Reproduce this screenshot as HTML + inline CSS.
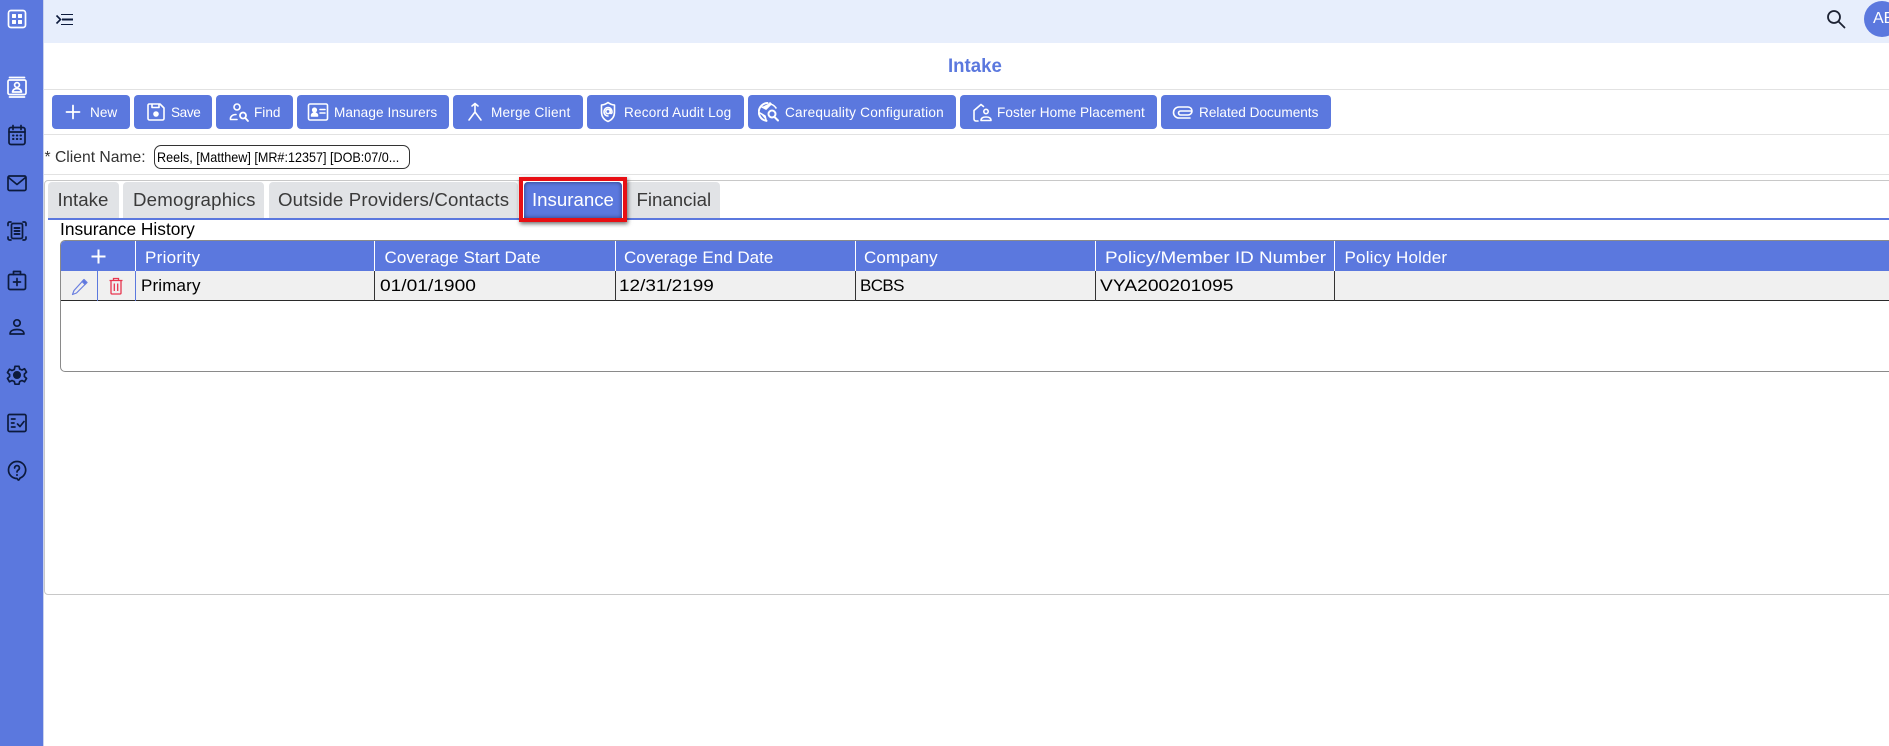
<!DOCTYPE html>
<html lang="en"><head><meta charset="utf-8"><title>Intake</title>
<style>
html,body{margin:0;padding:0;width:1889px;height:746px;overflow:hidden;background:#fff;font-family:"Liberation Sans",sans-serif}
#p{position:relative;width:1889px;height:746px;overflow:hidden}
#p div,#p span,#p svg{position:absolute;box-sizing:border-box}
.t{white-space:nowrap}
.hl{left:44px;width:1845px;height:1px;background:#e2e2e2}
.b{top:95px;height:34px;background:#5b78de;border-radius:4px}
.bt{top:96px;height:34px;line-height:34px;font-size:13.6px;color:#fff;white-space:nowrap}
.ic{top:101px;width:22px;height:22px;fill:none;stroke:#fff;stroke-width:1.6;stroke-linecap:round;stroke-linejoin:round}
.si{left:5px;width:24px;height:24px;fill:none;stroke:#0c1a3c;stroke-width:1.7;stroke-linecap:round;stroke-linejoin:round}
.tab{top:182px;height:36px;background:#e1e3e6;border-radius:4px 4px 0 0}
.tt{top:182px;height:36px;line-height:36px;font-size:18.67px;color:#3a3a3a;white-space:nowrap}
.hc{top:242px;height:30px;line-height:31px;font-size:17px;color:#fff;white-space:nowrap;transform-origin:0 50%}
.rc{top:271px;height:29px;line-height:30px;font-size:17px;color:#000;white-space:nowrap;transform-origin:0 50%}
.vw{top:241px;width:1px;height:30px;background:#fff}
.vd{top:271px;width:1px;height:30px;background:#333}
</style></head><body><div id="p">

<!-- sidebar -->
<div style="left:0;top:0;width:44px;height:746px;background:#5b78de;border-right:1px solid #c9d2ee"></div>
<svg class="si" style="top:7px;stroke:#fff" viewBox="0 0 24 24"><rect x="3.500" y="3.500" width="17" height="17" rx="2.500"/><rect x="7.500" y="7.500" width="3" height="3" fill="#fff" stroke-width="1"/><rect x="13.500" y="7.500" width="3" height="3" fill="#fff" stroke-width="1"/><rect x="7.500" y="13.500" width="3" height="3" fill="#fff" stroke-width="1"/><rect x="13.500" y="13.500" width="3" height="3" fill="#fff" stroke-width="1"/></svg>
<svg class="si" style="top:75px;stroke:#fff" viewBox="0 0 24 24"><rect x="3" y="5" width="18" height="14.500" rx="1.500"/><path d="M4.500 2.500h15M4.500 22h15"/><circle cx="12" cy="10" r="2.400"/><path d="M7.500 17c.4-2.400 2.200-3.400 4.500-3.400s4.100 1 4.500 3.400z"/></svg>
<svg class="si" style="top:123px" viewBox="0 0 24 24"><rect x="4" y="4.500" width="16" height="17" rx="2"/><path d="M4 9h16M8 2.500v4M16 2.500v4"/><path d="M8 12.500h.5M11.800 12.500h.5M15.500 12.500h.5M8 16h.5M11.800 16h.5M15.500 16h.5" stroke-width="2"/></svg>
<svg class="si" style="top:171px" viewBox="0 0 24 24"><rect x="3" y="5" width="18" height="14.500" rx="1.500"/><path d="M3.500 6.500 12 13.500l8.500-7"/></svg>
<svg class="si" style="top:219px" viewBox="0 0 24 24"><path d="M3 6.500V4.500A1.500 1.500 0 0 1 4.500 3H6M18 3h1.500A1.500 1.500 0 0 1 21 4.500v2M21 18v1.500a1.500 1.500 0 0 1-1.500 1.500H18M6 21H4.500A1.500 1.500 0 0 1 3 19.500V18"/><rect x="6.500" y="4.500" width="11" height="15" rx="1.500"/><path d="M9.500 9h5M9.500 12h5M9.500 15h5" stroke-width="2"/></svg>
<svg class="si" style="top:268px" viewBox="0 0 24 24"><rect x="3.500" y="6.500" width="17" height="15" rx="1.500"/><path d="M8.500 6.500V3.500h7v3M12 10.500v7M8.500 14h7"/></svg>
<svg class="si" style="top:315px" viewBox="0 0 24 24"><circle cx="12" cy="8" r="3.200"/><path d="M5 19c0-3 3-4.500 7-4.500s7 1.500 7 4.500z"/></svg>
<svg class="si" style="top:363px" viewBox="0 0 24 24"><path d="M10 2.800h4l.7 2.700 2.300 1 2.500-1.300 2 3.400-2.100 1.900v2.500l2.100 1.900-2 3.400-2.500-1.300-2.300 1-.7 2.700h-4l-.7-2.700-2.300-1-2.500 1.300-2-3.400 2.100-1.900V11L2.500 9.100l2-3.400L7 7l2.300-1z" transform="translate(0 .5)"/><circle cx="12" cy="12" r="3.200" fill="#0c1a3c"/></svg>
<svg class="si" style="top:411px" viewBox="0 0 24 24"><rect x="3" y="3.500" width="18" height="17" rx="1.500"/><path d="M6.500 8h3.500M6.500 12h2.500M6.500 16h3.500"/><path d="M12.500 13l2.500 2.500 4-5"/></svg>
<svg class="si" style="top:458px" viewBox="0 0 24 24"><path d="M12 3.500a8.500 8.500 0 1 0 0 17c.4 0 .7 1.700 1.500 1.700s1-1.900 1.800-2.300A8.500 8.500 0 0 0 12 3.500z"/><path d="M9.600 10a2.400 2.400 0 1 1 3.700 2c-.9.600-1.300 1-1.300 2"/><path d="M12 17h.01" stroke-width="2"/></svg>

<!-- top bar -->
<div style="left:44px;top:0;width:1845px;height:43px;background:#e7eefc"></div>
<svg style="left:55px;top:12px;width:20px;height:15px;fill:none;stroke:#0c1a3c" viewBox="0 0 20 15"><path d="M1.500 3.500l4 4-4 4" stroke-width="1.600"/><path d="M6 2.500h12M6 12.500h12" stroke-width="1.100"/><path d="M7 7.500h11" stroke-width="2"/></svg>
<svg style="left:1825px;top:8px;width:22px;height:22px;fill:none;stroke:#1d2233;stroke-width:1.800;stroke-linecap:round" viewBox="0 0 22 22"><circle cx="9" cy="9" r="6"/><path d="M13.500 13.500l6 6"/></svg>
<div style="left:1864px;top:1px;width:36px;height:36px;border-radius:50%;background:#5b78de"></div>
<span class="t" style="left:1873px;top:1px;line-height:36px;font-size:16px;color:#fff">AB</span>

<!-- title -->
<span class="t" style="left:948px;top:55px;line-height:24px;font-size:19px;font-weight:bold;color:#5b78de;transform:scaleX(.98);transform-origin:0 50%">Intake</span>
<div class="hl" style="top:89px"></div>

<!-- toolbar -->
<div class="b" style="left:52px;width:78px"></div><div class="b" style="left:134px;width:78px"></div><div class="b" style="left:216px;width:77px"></div><div class="b" style="left:297px;width:152px"></div><div class="b" style="left:453px;width:130px"></div><div class="b" style="left:587px;width:157px"></div><div class="b" style="left:748px;width:208px"></div><div class="b" style="left:960px;width:197px"></div><div class="b" style="left:1161px;width:170px"></div>
<span class="bt" style="left:90px">New</span><span class="bt" style="left:171px;letter-spacing:-.4px">Save</span><span class="bt" style="left:254px">Find</span><span class="bt" style="left:334px;letter-spacing:.08px">Manage Insurers</span><span class="bt" style="left:491px;letter-spacing:.2px">Merge Client</span><span class="bt" style="left:624px;letter-spacing:.19px">Record Audit Log</span><span class="bt" style="left:785px;letter-spacing:.22px">Carequality Configuration</span><span class="bt" style="left:997px;letter-spacing:.06px">Foster Home Placement</span><span class="bt" style="left:1199px">Related Documents</span>
<svg class="ic" style="left:62px;stroke-width:1.800" viewBox="0 0 22 22"><path d="M11 4.500v13M4.500 11h13"/></svg>
<svg class="ic" style="left:145px" viewBox="0 0 22 22"><path d="M4 3h11l4 4v10.500a1.500 1.500 0 0 1-1.500 1.500h-13A1.500 1.500 0 0 1 3 17.500v-13A1.500 1.500 0 0 1 4 3z"/><path d="M7 3.500v3h7v-3"/><circle cx="11" cy="13" r="2" fill="#fff"/></svg>
<svg class="ic" style="left:228px" viewBox="0 0 22 22"><circle cx="9" cy="6" r="3"/><path d="M2.500 18.500c-.5-2.800 2-5 5.500-5M2.500 18.500H9"/><circle cx="15" cy="14.500" r="3" stroke-width="1.800"/><path d="M17.300 17l2.700 3" stroke-width="1.800"/></svg>
<svg class="ic" style="left:307px" viewBox="0 0 22 22"><rect x="1.500" y="3" width="19" height="16" rx="1.500"/><circle cx="7.500" cy="9" r="1.800" fill="#fff"/><path d="M4.500 15c0-2 1.300-3 3-3s3 1 3 3z" fill="#fff"/><path d="M13 8.500h5M13 12h5"/></svg>
<svg class="ic" style="left:464px" viewBox="0 0 22 22"><path d="M8 5l3-2.500L14 5M11 3v8M11 11l-6 8M11 11l6 8"/></svg>
<svg class="ic" style="left:597px" viewBox="0 0 22 22"><path d="M11 1.500c1.800 1.400 4 2.300 6.500 2.500v7c0 4.500-2.500 7.800-6.500 9.500C7 18.800 4.500 15.500 4.500 11V4C7 3.800 9.200 2.900 11 1.500z"/><circle cx="11" cy="10.500" r="2.200"/><path d="M13.200 8.500v3c0 1.500 1.800 1.200 1.800-.5 0-2.500-1.700-4.500-4-4.500s-4 1.900-4 4.300c0 2.600 2 4.200 4 4.200"/></svg>
<svg class="ic" style="left:758px" viewBox="0 0 22 22"><path d="M9.500 2a9 9 0 0 0-1 17.900" stroke-width="2"/><path d="M4 6l4 2 3-3 2-2-1-1M2 12l5 3 1 4" fill="#fff"/><path d="M11 3c3 0 5 1 7 4"/><circle cx="14" cy="13" r="3.500" stroke-width="2"/><path d="M16.500 16l3.500 3.500" stroke-width="2"/></svg>
<svg class="ic" style="left:971px" viewBox="0 0 22 22"><path d="M7 20H5a2 2 0 0 1-2-2V9.500L10 3.500l2.500 2"/><circle cx="15" cy="10.500" r="2.200"/><path d="M10 19.500c0-2.500 2-3.500 5-3.500s5 1 5 3.500z"/></svg>
<svg class="ic" style="left:1172px" viewBox="0 0 22 22"><path d="M20 10H8.500a2 2 0 0 0 0 4H16a4 4 0 0 0 0-8H7a5.500 5.500 0 0 0 0 11h11"/></svg>
<div class="hl" style="top:134px"></div>

<!-- client -->
<span class="t" style="left:44.500px;top:146px;line-height:24px;font-size:15.700px;color:#333">* Client Name:</span>
<div style="left:154px;top:145px;width:256px;height:24px;border:1px solid #333;border-radius:7px;background:#fff"></div>
<span class="t" style="left:157px;top:145px;line-height:24px;font-size:14px;color:#000;transform:scaleX(.9);transform-origin:0 50%">Reels, [Matthew] [MR#:12357] [DOB:07/0...</span>
<div class="hl" style="top:174px"></div>

<!-- panel -->
<div style="left:44px;top:180px;width:1860px;height:415px;border:1px solid #c8c8c8;border-radius:4px;background:#fff"></div>
<div class="tab" style="left:48px;width:71px"></div><div class="tab" style="left:123px;width:141px"></div><div class="tab" style="left:269px;width:249px"></div><div class="tab" style="left:524px;width:98px;background:#5b78de;box-shadow:inset 0 0 4px rgba(0,0,30,.55)"></div><div class="tab" style="left:626px;width:94px"></div>
<div style="left:48px;top:218px;width:1841px;height:2px;background:#5b78de"></div>
<div style="left:519px;top:177px;width:108px;height:45px;border:4px solid #e80f14;box-shadow:1px 2px 4px rgba(0,0,0,.55)"></div>
<span class="tt" style="left:57.500px">Intake</span><span class="tt" style="left:133px;letter-spacing:.2px">Demographics</span><span class="tt" style="left:278px;letter-spacing:.16px">Outside Providers/Contacts</span><span class="tt" style="left:532px;color:#fff">Insurance</span><span class="tt" style="left:636.500px">Financial</span>

<span class="t" style="left:60px;top:219px;line-height:20px;font-size:17.330px;color:#000">Insurance History</span>

<!-- table -->
<div style="left:60px;top:240px;width:1860px;height:132px;border:1px solid #8a8a8a;border-radius:5px;background:#fff;overflow:hidden"></div>
<div style="left:61px;top:241px;width:1828px;height:30px;background:#5b78de;border-radius:4px 0 0 0"></div>
<div style="left:61px;top:271px;width:1828px;height:30px;background:#f0f0f0;border-bottom:1.500px solid #2a2a2a"></div>
<div class="vw" style="left:135px"></div><div class="vw" style="left:374px"></div><div class="vw" style="left:615px"></div><div class="vw" style="left:855px"></div><div class="vw" style="left:1095px"></div><div class="vw" style="left:1334px"></div>
<div class="vd" style="left:97px;background:#5b78de"></div><div class="vd" style="left:135px;background:#5b78de"></div><div class="vd" style="left:374px"></div><div class="vd" style="left:615px"></div><div class="vd" style="left:855px"></div><div class="vd" style="left:1095px"></div><div class="vd" style="left:1334px"></div>
<svg style="left:90px;top:248px;width:17px;height:17px;fill:none;stroke:#fff;stroke-width:2" viewBox="0 0 17 17"><path d="M8.500 1.500v14M1.500 8.500h14"/></svg>
<span class="hc" style="left:145px;letter-spacing:.3px">Priority</span><span class="hc" style="left:384.500px;letter-spacing:.06px">Coverage Start Date</span><span class="hc" style="left:624px">Coverage End Date</span><span class="hc" style="left:864px;letter-spacing:.15px">Company</span><span class="hc" style="left:1104.500px;transform:scaleX(1.109)">Policy/Member ID Number</span><span class="hc" style="left:1344.500px;letter-spacing:.2px">Policy Holder</span>
<svg style="left:71px;top:278px;width:18px;height:18px;fill:none;stroke:#6a7fe0;stroke-width:1.200;stroke-linejoin:round" viewBox="0 0 18 18"><path d="M13 1.500l3 3L5.500 15 1.500 16.500 3 12.500z"/><path d="M13 1.500l3 3-2 2-3-3z" fill="#5b78de"/></svg>
<svg style="left:108px;top:277px;width:16px;height:18px;fill:none;stroke:#e8364f;stroke-width:1.300" viewBox="0 0 16 18"><path d="M1.500 3.500h13M5.500 3.500V1.500h5v2M3 3.500v12.500a1 1 0 0 0 1 1h8a1 1 0 0 0 1-1V3.500M6.300 6.500v7.500M9.700 6.500v7.500"/></svg>
<span class="rc" style="left:141px;letter-spacing:.15px">Primary</span><span class="rc" style="left:380px;transform:scaleX(1.127)">01/01/1900</span><span class="rc" style="left:619px;transform:scaleX(1.114)">12/31/2199</span><span class="rc" style="left:860px;letter-spacing:-.6px">BCBS</span><span class="rc" style="left:1100px;transform:scaleX(1.133)">VYA200201095</span>

</div></body></html>
